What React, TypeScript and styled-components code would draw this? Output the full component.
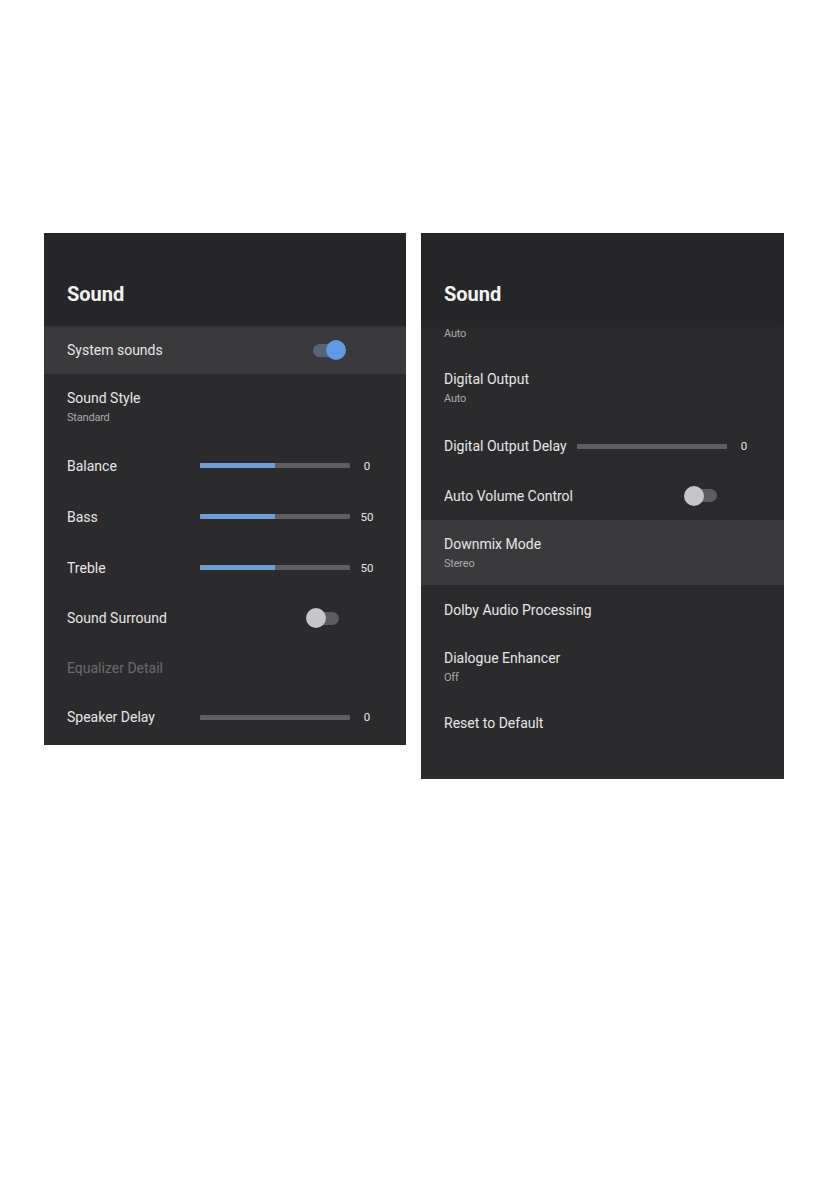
import React from "react";
import styled, { createGlobalStyle } from "styled-components";

const Global = createGlobalStyle`
  html, body { margin: 0; padding: 0; background: #ffffff; }
  body { font-family: Roboto, "Noto Sans", Arial, sans-serif; -webkit-font-smoothing: antialiased; }
`;

const Page = styled.div`
  display: flex;
  align-items: flex-start;
  gap: 15px;
  padding: 233px 0 0 44px;
  min-height: 1191px;
  box-sizing: border-box;
`;

const Panel = styled.section<{ $w: number; $h: number }>`
  width: ${(p) => p.$w}px;
  height: ${(p) => p.$h}px;
  background: #2b2b2d;
  display: flex;
  flex-direction: column;
  overflow: hidden;
  color: #e6e6e6;
`;

const Header = styled.header`
  height: 93px;
  flex: none;
  box-sizing: border-box;
  padding: 50px 0 0 23px;
  background: #262628;
  box-shadow: 0 1px 2px rgba(0, 0, 0, 0.12);
  position: relative;
  z-index: 1;
`;

const Title = styled.h1`
  margin: 0;
  font-size: 20px;
  line-height: 22px;
  font-weight: 700;
  color: #f2f2f2;
`;

const Row = styled.div<{ $h: number; $active?: boolean }>`
  height: ${(p) => p.$h}px;
  flex: none;
  box-sizing: border-box;
  display: flex;
  align-items: center;
  padding: 0 0 0 23px;
  background: ${(p) => (p.$active ? "#3a3a3c" : "transparent")};
`;

const StackRow = styled.div<{ $h: number; $active?: boolean; $top?: number }>`
  height: ${(p) => p.$h}px;
  flex: none;
  box-sizing: border-box;
  display: flex;
  flex-direction: column;
  gap: 3px;
  padding: ${(p) => p.$top ?? 14}px 0 0 23px;
  background: ${(p) => (p.$active ? "#3a3a3c" : "transparent")};
`;

const Label = styled.span<{ $dim?: boolean }>`
  font-size: 14px;
  line-height: 20px;
  color: ${(p) => (p.$dim ? "#6b6b6d" : "#e6e6e6")};
  white-space: nowrap;
`;

const ToggleLabel = styled(Label)`
  flex: 1;
`;

const SliderLabel = styled(Label)`
  width: 133px;
  flex: none;
`;

const Sub = styled.span`
  font-size: 11px;
  line-height: 14px;
  color: #a9a9ab;
  letter-spacing: -0.2px;
`;

const Track = styled.div`
  width: 150px;
  height: 5px;
  flex: none;
  background: #5f5f61;
  border-radius: 1px;
  overflow: hidden;
  display: flex;
`;

const Fill = styled.div`
  height: 100%;
  background: #6b9fd5;
`;

const Value = styled.span`
  width: 24px;
  margin-left: 5px;
  text-align: center;
  font-size: 11.5px;
  line-height: 14px;
  color: #e6e6e6;
`;

const Switch = styled.div<{ $on: boolean }>`
  width: 40px;
  height: 21px;
  flex: none;
  margin-right: 60px;
  position: relative;
  display: flex;
  align-items: center;
  justify-content: ${(p) => (p.$on ? "flex-end" : "flex-start")};
`;

const SwitchTrack = styled.div<{ $on: boolean }>`
  position: absolute;
  left: 7px;
  right: 7px;
  top: 4px;
  height: 13px;
  border-radius: 7px;
  background: ${(p) => (p.$on ? "#576377" : "#5d5d5f")};
`;

const Knob = styled.div<{ $on: boolean }>`
  width: 20px;
  height: 20px;
  border-radius: 50%;
  position: relative;
  background: ${(p) => (p.$on ? "#5f9be0" : "#c6c6c8")};
`;

const Toggle = ({ on }: { on: boolean }) => (
  <Switch $on={on}>
    <SwitchTrack $on={on} />
    <Knob $on={on} />
  </Switch>
);

const Slider = ({ label, pct, value, h }: { label: string; pct: number; value: string; h: number }) => (
  <Row $h={h}>
    <SliderLabel>{label}</SliderLabel>
    <Track>
      <Fill style={{ width: `${pct}%` }} />
    </Track>
    <Value>{value}</Value>
  </Row>
);

export default function App() {
  return (
    <>
      <Global />
      <Page>
        <Panel $w={362} $h={512}>
          <Header>
            <Title>Sound</Title>
          </Header>
          <Row $h={48} $active>
            <ToggleLabel>System sounds</ToggleLabel>
            <Toggle on />
          </Row>
          <StackRow $h={66}>
            <Label>Sound Style</Label>
            <Sub>Standard</Sub>
          </StackRow>
          <Slider label="Balance" pct={50} value="0" h={51} />
          <Slider label="Bass" pct={50} value="50" h={51} />
          <Slider label="Treble" pct={50} value="50" h={51} />
          <Row $h={50}>
            <ToggleLabel>Sound Surround</ToggleLabel>
            <Toggle on={false} />
          </Row>
          <Row $h={49}>
            <Label $dim>Equalizer Detail</Label>
          </Row>
          <Slider label="Speaker Delay" pct={0} value="0" h={50} />
        </Panel>

        <Panel $w={363} $h={546}>
          <Header>
            <Title>Sound</Title>
          </Header>
          <StackRow $h={29} $top={1}>
            <Sub>Auto</Sub>
          </StackRow>
          <StackRow $h={66}>
            <Label>Digital Output</Label>
            <Sub>Auto</Sub>
          </StackRow>
          <Slider label="Digital Output Delay" pct={0} value="0" h={50} />
          <Row $h={49}>
            <ToggleLabel>Auto Volume Control</ToggleLabel>
            <Toggle on={false} />
          </Row>
          <StackRow $h={65} $active>
            <Label>Downmix Mode</Label>
            <Sub>Stereo</Sub>
          </StackRow>
          <Row $h={49}>
            <Label>Dolby Audio Processing</Label>
          </Row>
          <StackRow $h={66}>
            <Label>Dialogue Enhancer</Label>
            <Sub>Off</Sub>
          </StackRow>
          <Row $h={46}>
            <Label>Reset to Default</Label>
          </Row>
        </Panel>
      </Page>
    </>
  );
}
